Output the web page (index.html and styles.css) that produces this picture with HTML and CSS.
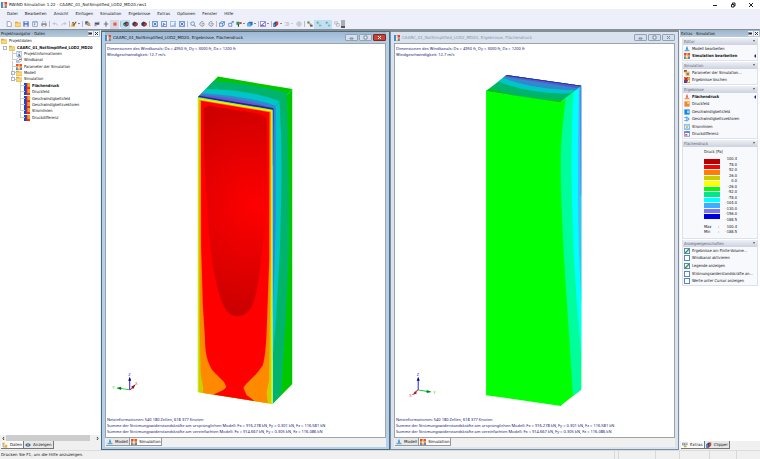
FILE: index.html
```
<!DOCTYPE html>
<html lang="de">
<head>
<meta charset="utf-8">
<title>RWIND Simulation 1.22</title>
<link rel="stylesheet" href="styles.css">
</head>
<body>
<svg class="sprite" aria-hidden="true">
  <defs>
    <symbol id="app" viewBox="0 0 16 16"><path fill="#f7a258" d="M0 0h16v16H0z"/><path fill="#2f8fdc" d="M0 0h5v16H0z"/><path fill="#fff" d="M6 2h3v12H6z"/><path fill="#e4433b" d="M10 0h6v6h-6z"/><path fill="#2f8fdc" d="M11 9h4v7h-4z"/></symbol>
    <symbol id="sim" viewBox="0 0 16 16"><path fill="#f9a046" d="M0 0h16v16H0z"/><path fill="#ee4b35" d="M0 0h6v6H0zM11 0h5v5h-5z"/><path fill="#3b8fe0" d="M0 10h5v6H0zM11 10h5v6h-5z"/><path fill="#fff3c4" d="M7 3l4 9H4z"/></symbol>
    <symbol id="tower" viewBox="0 0 16 16"><path fill="#2d8fd8" d="M7 1h2l2 9H5z"/><path fill="#58aee8" d="M2 10h12l1 4H1z"/></symbol>
    <symbol id="tower-hot" viewBox="0 0 16 16"><path fill="#ee5a24" d="M7 1h2l2 9H5z"/><path fill="#f79a4d" d="M2 10h12l1 4H1z"/></symbol>
    <symbol id="folder" viewBox="0 0 16 16"><path fill="#dda93a" d="M0 2h7l1 2h8v11H0z"/><path fill="#fbd873" d="M1 6h15l-1 8H1z"/></symbol>
    <symbol id="info" viewBox="0 0 16 16"><path fill="#fff" stroke="#8aa0b8" stroke-width="2" d="M2 1h12v14H2z"/><path fill="#2469b0" d="M7 3h3v2H7zM6 7h4v5h2v2H5v-2h2V9H6z"/></symbol>
    <symbol id="tunnel" viewBox="0 0 16 16"><path fill="#fff" stroke="#8aa0b8" stroke-width="2" d="M1 6l5-4h9v8l-5 4H1z"/><path fill="#e45a45" d="M8 5h7v3H8z"/><path fill="#4c9bd8" d="M3 9h6v3H3z"/></symbol>
    <symbol id="result" viewBox="0 0 16 16"><path fill="#e92a1e" d="M0 0h16v16H0z"/><path fill="#f6a01c" d="M9 0h7v11H9z"/><path fill="#1846c8" d="M0 0h6v16H0z"/><path fill="#8e2aa0" d="M6 0h2v16H6z"/></symbol>
    <symbol id="new" viewBox="0 0 16 16"><path fill="#fff" stroke="#7c8aa0" stroke-width="2" d="M3 1h7l4 4v10H3z"/></symbol>
    <symbol id="save" viewBox="0 0 16 16"><path fill="#4463c0" d="M1 1h14v14H1z"/><path fill="#dfe6fa" d="M4 1h8v5H4zM4 9h8v6H4z"/></symbol>
    <symbol id="preview" viewBox="0 0 16 16"><path fill="#5b8ed5" d="M1 1h14v14H1z"/><path fill="#fff" d="M3 4h10v9H3z"/><path fill="#e0843c" d="M5 6h4v5H5z"/></symbol>
    <symbol id="print" viewBox="0 0 16 16"><path fill="#777f8b" d="M1 6h14v7H1z"/><path fill="#fff" stroke="#777f8b" d="M4 1h8v5H4zM4 10h8v5H4z"/></symbol>
    <symbol id="undo" viewBox="0 0 16 16"><path fill="none" stroke="#b2b6bf" stroke-width="2" d="M3 7h7q4 0 4 5M7 3L3 7l4 4"/></symbol>
    <symbol id="redo" viewBox="0 0 16 16"><path fill="none" stroke="#b2b6bf" stroke-width="2" d="M13 7H6q-4 0-4 5M9 3l4 4-4 4"/></symbol>
    <symbol id="brush" viewBox="0 0 16 16"><path fill="#e8b23a" d="M2 6h9v9H0z"/><path fill="none" stroke="#5c4a3a" stroke-width="3" d="M6 12l8-10"/><path fill="#5c4a3a" d="M3 3h5v3H3z"/></symbol>
    <symbol id="node" viewBox="0 0 16 16"><path fill="none" stroke="#667288" stroke-width="2" d="M2 3h7v6H2zM7 12h7"/><path fill="#c9a45a" d="M8 5h6v8H8z"/><path fill="#42506b" d="M1 1h6v6H1z"/></symbol>
    <symbol id="cam" viewBox="0 0 16 16"><path fill="#4b566a" d="M2 4h12v6H2z"/><path fill="#98a5bd" d="M1 9h6v5H1zM10 2h5v3h-5z"/></symbol>
    <symbol id="axes" viewBox="0 0 16 16"><path fill="none" stroke="#6b7688" stroke-width="3" d="M8 1v14M2 8h12"/></symbol>
    <symbol id="dot" viewBox="0 0 16 16"><circle cx="8" cy="8" r="5" fill="#ee5d52"/></symbol>
    <symbol id="solid" viewBox="0 0 16 16"><path fill="#38404f" d="M1 6l8-5 6 3v7l-7 4-7-4z"/><path fill="#4bb8a6" d="M3 8l4 2v3l-4-2z"/><path fill="#e2543e" d="M9 5l5 1v4l-5 2z"/></symbol>
    <symbol id="solid-red" viewBox="0 0 16 16"><path fill="#34394a" d="M1 5l6-4 8 4v6l-7 4-7-4z"/><path fill="#d93427" d="M7 7l7-2v5l-7 4z"/></symbol>
    <symbol id="zoomfit" viewBox="0 0 16 16"><path fill="#dbe8fb" stroke="#3c72c8" stroke-width="2" d="M1 1h14v14H1z"/><path fill="none" stroke="#2759ad" stroke-width="2" d="M4 4l8 8M12 4l-8 8"/></symbol>
    <symbol id="view" viewBox="0 0 16 16"><path fill="#eaf2fe" stroke="#3c72c8" stroke-width="2" d="M1 1h14v14H1z"/><path fill="#3c72c8" d="M5 8h7v2H5zM5 5h4v2H5zM4 11h4v2H4z"/></symbol>
    <symbol id="view-x" viewBox="0 0 16 16"><path fill="#eaf2fe" stroke="#7fa4dd" stroke-width="2" d="M1 1h14v14H1z"/><path fill="none" stroke="#7fa4dd" stroke-width="2" d="M4 12h8V5"/></symbol>
    <symbol id="lens" viewBox="0 0 16 16"><circle cx="7" cy="7" r="5" fill="#e5f0fd" stroke="#4a7fcf" stroke-width="2"/><path stroke="#d8883c" stroke-width="3" d="M10 11l5 4"/></symbol>
    <symbol id="turn" viewBox="0 0 16 16"><path fill="none" stroke="#4a7fcf" stroke-width="2" d="M12 3a6 6 0 1 0 2 7"/><path fill="#d8883c" d="M7 6h8v3H7z"/></symbol>
    <symbol id="cube" viewBox="0 0 16 16"><path fill="#e5effc" stroke="#3f76c8" stroke-width="2" d="M1 6l5-4h9v8l-5 4H1zM1 6h9v8M10 6l5-4"/></symbol>
    <symbol id="box" viewBox="0 0 16 16"><path fill="#fff" stroke="#3f76c8" stroke-width="2" d="M2 6h8v8H2z"/><path fill="none" stroke="#3f76c8" stroke-width="2" d="M8 7l6-6M10 1h4v4"/></symbol>
    <symbol id="flag" viewBox="0 0 16 16"><path fill="#1f9c46" d="M1 2h8v8H1z"/><path fill="#d33a30" d="M9 3h6v5H9z"/><path fill="#374152" d="M5 8h3v7H5z"/></symbol>
    <symbol id="block" viewBox="0 0 16 16"><path fill="#2a6fae" d="M1 6l5-4h9v8l-5 4H1z"/><path fill="#63b4e6" d="M1 6h9v8H1z"/></symbol>
    <symbol id="graph" viewBox="0 0 16 16"><path fill="#fff" stroke="#4a76cc" stroke-width="2" d="M1 1h14v14H1z"/><path fill="none" stroke="#d94bb4" stroke-width="3" d="M2 13L14 3"/><path stroke="#3454c4" stroke-width="2" d="M3 12h9"/></symbol>
    <symbol id="clip" viewBox="0 0 16 16"><path fill="#27487f" d="M1 6l6-5h5v9l-5 5H1z"/><path fill="#e13a2b" d="M8 5l6-4v8l-6 5z"/><path fill="#4b8fd0" d="M1 7h5v7H1z"/></symbol>
    <symbol id="grey" viewBox="0 0 16 16"><path fill="none" stroke="#b9bec8" stroke-width="2" d="M2 4h8M5 8h9M2 12h8M11 2v12"/></symbol>
    <symbol id="grey-orb" viewBox="0 0 16 16"><circle cx="8" cy="8" r="6" fill="#d9dce3" stroke="#b9bec8" stroke-width="2"/><path stroke="#b9bec8" stroke-width="2" d="M2 8h12M8 2v12"/></symbol>
    <symbol id="layers" viewBox="0 0 16 16"><path fill="#5a8a58" d="M1 1h6v6H1z"/><path fill="#d8b043" d="M6 6h6v5H6z"/><path fill="#46618f" d="M8 10h7v5H8z"/></symbol>
    <symbol id="layers-b" viewBox="0 0 16 16"><path fill="#58a4b8" d="M2 2h5v5H2z"/><path fill="#e0c87a" d="M6 6h5v3H6z"/><path fill="#72b0cc" d="M8 10h6v4H8z"/></symbol>
    <symbol id="layers-g" viewBox="0 0 16 16"><path fill="#fff" stroke="#a4a9b3" stroke-width="2" d="M2 2h7v6H2zM7 7h7v7H7z"/></symbol>
    <symbol id="gear" viewBox="0 0 16 16"><path fill="#a95a2d" d="M0 0h8v6H0z"/><path fill="#f4b942" d="M4 4h11v11H4z"/><path fill="#578ac0" d="M7 8h6v6H7z"/></symbol>
    <symbol id="clear" viewBox="0 0 16 16"><path fill="#f39a42" d="M0 0h16v16H0z"/><path fill="#2a52c2" d="M0 8h8v8H0z"/><path stroke="#d3222a" stroke-width="3" d="M1 1l9 9M10 1L1 10"/><path fill="#fff" d="M11 8h3v5h-3z"/></symbol>
    <symbol id="field-o" viewBox="0 0 16 16"><path fill="#f3852c" d="M1 1h14v14H1z"/><path fill="#ffd19a" d="M9 2h5v6H9z"/></symbol>
    <symbol id="field-b" viewBox="0 0 16 16"><path fill="#1a86dc" d="M1 1h14v14H1z"/><path fill="#8fd8f8" d="M8 4h6v7H8z"/></symbol>
    <symbol id="vectors" viewBox="0 0 16 16"><path fill="none" stroke="#2a8fe0" stroke-width="2" d="M1 4h8M5 8h9M1 12h8M7 1l3 3-3 3M11 5l3 3-3 3M7 9l3 3-3 3"/></symbol>
    <symbol id="stream" viewBox="0 0 16 16"><path fill="#d9effc" stroke="#5aace6" stroke-width="2" d="M1 1h14v14H1z"/><circle cx="8" cy="8" r="3" fill="#e9b93a"/><path stroke="#5aace6" d="M1 4h14M1 12h14"/></symbol>
    <symbol id="diff" viewBox="0 0 16 16"><path fill="#fff" stroke="#5b74c8" stroke-width="2" d="M1 2h14v12H1z"/><path fill="#5b74c8" d="M1 1h14v4H1z"/><path fill="#e0503e" d="M3 8h6v4H3z"/></symbol>
    <symbol id="data" viewBox="0 0 16 16"><path fill="#f0b23a" d="M1 1h6v6H1zM7 7h7v8H7z"/><path fill="none" stroke="#5c86c0" stroke-width="2" d="M3 7v6h4"/></symbol>
    <symbol id="eye" viewBox="0 0 16 16"><path fill="#44648c" d="M0 8q8-9 16 0-8 9-16 0"/><circle cx="8" cy="8" r="2" fill="#fff"/></symbol>
    <symbol id="extras" viewBox="0 0 16 16"><path fill="none" stroke="#4f7c8c" stroke-width="2" d="M1 3h6v5H1zM9 3h6M9 7h6"/><path fill="#d3a845" d="M5 9h7v5H5z"/></symbol>
  </defs>
</svg>

<header class="titlebar">
  <svg class="ic"><use href="#app"/></svg>
  <h1>RWIND Simulation 1.22 - CAARC_01_NotSimplified_LOD2_MD20.rws1</h1>
  <div class="winbtns">
    <button aria-label="Minimieren"><svg viewBox="0 0 6 6"><path d="M1 3.500h4"/></svg></button>
    <button aria-label="Wiederherstellen"><svg viewBox="0 0 6 6"><path d="M1.500 2.500h2.500v2.500h-2.500zM2.500 2v-1h2.500v3h-1"/></svg></button>
    <button aria-label="Schließen"><svg viewBox="0 0 6 6"><path d="M1 1l4 4M5 1l-4 4"/></svg></button>
  </div>
</header>

<nav class="menubar">
  <button>Datei</button><button>Bearbeiten</button><button>Ansicht</button><button>Einfügen</button><button>Simulation</button><button>Ergebnisse</button><button>Extras</button><button>Optionen</button><button>Fenster</button><button>Hilfe</button>
</nav>

<div class="toolbar" role="toolbar" aria-label="Werkzeuge">
  <div class="tight">
    <button aria-label="Neu"><svg class="ic"><use href="#new"/></svg></button>
    <button aria-label="Öffnen"><svg class="ic"><use href="#folder"/></svg></button>
    <button aria-label="Speichern"><svg class="ic"><use href="#save"/></svg></button>
    <button aria-label="Vorschau"><svg class="ic"><use href="#preview"/></svg></button>
    <button aria-label="Drucken"><svg class="ic"><use href="#print"/></svg></button>
  </div>
  <i class="sep"></i>
  <button aria-label="Rückgängig"><svg class="ic"><use href="#undo"/></svg></button>
  <button aria-label="Wiederholen"><svg class="ic"><use href="#redo"/></svg></button>
  <i class="sep"></i>
  <button class="drop" aria-label="Farben"><svg class="ic"><use href="#brush"/></svg></button>
  <i class="sep"></i>
  <button aria-label="Navigator"><svg class="ic"><use href="#node"/></svg></button>
  <button aria-label="Kamera"><svg class="ic"><use href="#cam"/></svg></button>
  <button aria-label="Achsen"><svg class="ic"><use href="#axes"/></svg></button>
  <button class="on hot" aria-label="Punkt"><svg class="ic"><use href="#dot"/></svg></button>
  <i class="sep"></i>
  <button class="on" aria-label="Volumen"><svg class="ic"><use href="#solid"/></svg></button>
  <button aria-label="Flächen"><svg class="ic"><use href="#solid-red"/></svg></button>
  <button aria-label="Linien"><svg class="ic"><use href="#solid-red"/></svg></button>
  <i class="sep"></i>
  <button aria-label="Alles zeigen"><svg class="ic"><use href="#zoomfit"/></svg></button>
  <button aria-label="Ansicht X"><svg class="ic"><use href="#view"/></svg></button>
  <button aria-label="Ansicht Y"><svg class="ic"><use href="#view-x"/></svg></button>
  <button aria-label="Ansicht Z"><svg class="ic"><use href="#zoomfit"/></svg></button>
  <i class="sep"></i>
  <button aria-label="Lupe"><svg class="ic"><use href="#lens"/></svg></button>
  <button aria-label="Drehen"><svg class="ic"><use href="#turn"/></svg></button>
  <button aria-label="Verschieben"><svg class="ic"><use href="#turn"/></svg></button>
  <i class="sep"></i>
  <button aria-label="Isometrie"><svg class="ic"><use href="#cube"/></svg></button>
  <button aria-label="Perspektive"><svg class="ic"><use href="#box"/></svg></button>
  <button class="drop" aria-label="Richtung"><svg class="ic"><use href="#flag"/></svg></button>
  <button class="drop" aria-label="Darstellung"><svg class="ic"><use href="#block"/></svg></button>
  <i class="sep"></i>
  <button class="drop" aria-label="Diagramm"><svg class="ic"><use href="#graph"/></svg></button>
  <i class="sep"></i>
  <button class="drop" aria-label="Clipper"><svg class="ic"><use href="#clip"/></svg></button>
  <button class="drop dim" aria-label="Werte"><svg class="ic"><use href="#grey"/></svg></button>
  <button aria-label="Netz"><svg class="ic"><use href="#grey-orb"/></svg></button>
  <i class="sep"></i>
  <button aria-label="Ebenen"><svg class="ic"><use href="#layers"/></svg></button>
  <button class="on" aria-label="Ebene 1"><svg class="ic"><use href="#layers-b"/></svg></button>
  <button class="on" aria-label="Ebene 2"><svg class="ic"><use href="#layers-b"/></svg></button>
  <button aria-label="Kopieren"><svg class="ic"><use href="#layers-g"/></svg></button>
  <i class="grip"></i>
</div>

<main class="work">
  <aside class="dock navigator">
    <header class="dockhead"><h2>Projektnavigator - Daten</h2><button aria-label="Anheften"><svg viewBox="0 0 5 5"><path d="M1 1v3M1 2.500h3M3 1v3"/></svg></button><button aria-label="Schließen"><svg viewBox="0 0 5 5"><path d="M1 1l3 3M4 1l-3 3"/></svg></button></header>
    <ul class="tree">
      <li><svg class="ic"><use href="#folder"/></svg>Projektdaten</li>
      <li class="lv1 strong"><i class="exp"></i><svg class="ic"><use href="#folder"/></svg>CAARC_01_NotSimplified_LOD2_MD20</li>
      <li class="lv2"><svg class="ic"><use href="#info"/></svg>Projektinformationen</li>
      <li class="lv2"><svg class="ic"><use href="#tunnel"/></svg>Windkanal</li>
      <li class="lv2"><svg class="ic"><use href="#sim"/></svg>Parameter der Simulation</li>
      <li class="lv2"><i class="exp"></i><svg class="ic"><use href="#folder"/></svg>Modell</li>
      <li class="lv2"><i class="exp"></i><svg class="ic"><use href="#folder"/></svg>Simulation</li>
      <li class="lv3 strong"><svg class="ic"><use href="#result"/></svg>Flächendruck</li>
      <li class="lv3"><svg class="ic"><use href="#result"/></svg>Druckfeld</li>
      <li class="lv3"><svg class="ic"><use href="#result"/></svg>Geschwindigkeitsfeld</li>
      <li class="lv3"><svg class="ic"><use href="#result"/></svg>Geschwindigkeitsvektoren</li>
      <li class="lv3"><svg class="ic"><use href="#result"/></svg>Stromlinien</li>
      <li class="lv3"><svg class="ic"><use href="#result"/></svg>Druckdifferenz</li>
    </ul>
    <div class="hscroll"><button aria-label="Links"><svg viewBox="0 0 5 5"><path d="M3 1l-1 1.500 1 1.500"/></svg></button><i></i><button aria-label="Rechts"><svg viewBox="0 0 5 5"><path d="M2 1l1 1.500-1 1.500"/></svg></button></div>
    <div class="tabs docktabs"><button class="cur"><svg class="ic"><use href="#data"/></svg>Daten</button><button><svg class="ic"><use href="#eye"/></svg>Anzeigen</button></div>
  </aside>

  <section class="mdi">
    <article class="win active">
      <header class="winhead"><svg class="ic"><use href="#app"/></svg><h2>CAARC_01_NotSimplified_LOD2_MD20, Ergebnisse, Flächendruck</h2>
        <div class="ctl"><button aria-label="Minimieren"><svg viewBox="0 0 5 5"><path d="M1 3h3v1h-3z"/></svg></button><button aria-label="Maximieren"><svg viewBox="0 0 5 5"><path d="M1 1h3v3h-3z"/></svg></button><button class="close" aria-label="Schließen"><svg viewBox="0 0 5 5"><path d="M1 1l3 3M4 1l-3 3"/></svg></button></div></header>
      <div class="canvas">
        <p>Dimensionen des Windkanals: Dx = 4950 ft, Dy = 3000 ft, Dz = 1200 ft<br>Windgeschwindigkeit: 12.7 m/s</p>
        <svg class="scene" viewBox="107 44 278 392" role="img" aria-label="Flächendruck, Luvseite">
          <defs>
            <radialGradient id="press" gradientUnits="userSpaceOnUse" cx="256" cy="205" r="115"><stop offset="0" stop-color="#ff0000"/><stop offset="1" stop-color="#c80000"/></radialGradient>
            <clipPath id="top1"><path d="M198.500 97l20-20.500L293 89l-20 20.500z"/></clipPath>
            <clipPath id="front1"><path d="M198 97l75 12.500V403l-75-12z"/></clipPath>
            <clipPath id="side1"><path d="M273 109l20-20v294l-20 20z"/></clipPath>
          </defs>
          <g clip-path="url(#side1)">
            <path fill="#00c800" d="M273 85h20v320h-20z"/>
            <path fill="#00b56b" d="M270 85l17 8 1 24q2 80 1.300 133l-3 65-5 79-11 12z"/>
            <path fill="#00c4c8" d="M270 100l10 1q3 50 1.500 99l-1.200 50-4 70-3.300 40h-3z"/>
            <path fill="#3088cf" d="M270 100l6.300 5v110l-1.300 50-2 50h-3z"/>
            <path fill="#3038b0" d="M272 105h2.300l-.8 60h-1.500z"/>
          </g>
          <g clip-path="url(#top1)">
            <path fill="#00c800" d="M195 75h100v36H195z"/>
            <path fill="#00b56b" d="M195 81h20q45 4 72.500 12l5 18h-98z"/>
            <path fill="#00c4c8" d="M195 89h12q45 1 73 12l-3 12h-82z"/>
            <path fill="#3088cf" d="M195 93h9q45 3 72 12.500l-4 8h-77z"/>
            <path fill="#6858c8" d="M195 95l7-.5q40 4 64 11l8 3-3 4z"/>
            <path fill="#2020a8" d="M195 96l5-.5 74 12.500v3z"/>
          </g>
          <g clip-path="url(#front1)">
            <path fill="#7df02a" d="M198 96h76v310h-76z"/>
            <path fill="#f4ee00" d="M199 98l73.200 12.200V405H199z"/>
            <path fill="#cfcf00" d="M199.500 99.500l72 12V405h-72z"/>
            <path fill="#ff8a00" d="M200.300 99.800l71 11.700V260l-1.300 75-.5 45-2.500 12 1.500 12-67.500-3 3-13-2.700-15-1-50z"/>
            <path fill="#ff0000" d="M201.600 100.500l68.400 11.500-.3 148-2.700 73c-1 20-3 33-5 33-4 8-17 17-18 21l3 7 9.500 7-43-7c6-3 13-5 13-8 0-5-8-10-13-16-6-8-8-20-8-34l-2-30-1.800-60z"/>
            <path fill="url(#press)" d="M204.300 110q.5-4 5-4.500l50 8q8 2 8 9v50c0 30-3 70-5.500 83-2 23-5 40-9 49-3 7-9 11-15 11-8 0-13-7-17-19-4-11-9-38-10.300-55-3-35-6-80-6-105z"/>
          </g>
          <g class="triad">
            <path stroke="#2020ff" d="M130.500 389v-11"/><path fill="#000080" d="M129 380l1.500-4 1.500 4z"/>
            <path stroke="#00c820" d="M130.500 389l-9-1.500"/><path fill="#008020" d="M122 385.800l-5 1.200 5 2z"/>
            <path stroke="#e02020" d="M130.500 389l4-3"/><path fill="#801010" d="M132 386l4.500-2.500-2.500 4.500z"/>
            <text x="129" y="375" fill="#2020ff">Z</text><text x="113" y="388" fill="#00e020">Y</text><text x="136" y="384" fill="#f03030">X</text>
          </g>
        </svg>
        <p class="foot">Netzinformationen: 540 180 Zellen, 618 377 Knoten<br>Summe der Strömungswiderstandskräfte am ursprünglichen Modell: Fx = 916.278 kN, Fy = 0.301 kN, Fz = 116.581 kN<br>Summe der Strömungswiderstandskräfte am vereinfachten Modell: Fx = 914.667 kN, Fy = 0.305 kN, Fz = 116.086 kN</p>
      </div>
      <div class="tabs"><button><svg class="ic"><use href="#tower"/></svg>Modell</button><button class="cur"><svg class="ic"><use href="#sim"/></svg>Simulation</button></div>
    </article>

    <article class="win">
      <header class="winhead"><svg class="ic"><use href="#app"/></svg><h2>CAARC_01_NotSimplified_LOD2_MD20, Ergebnisse, Flächendruck</h2>
        <div class="ctl"><button aria-label="Minimieren"><svg viewBox="0 0 5 5"><path d="M1 3h3v1h-3z"/></svg></button><button aria-label="Maximieren"><svg viewBox="0 0 5 5"><path d="M1 1h3v3h-3z"/></svg></button><button aria-label="Schließen"><svg viewBox="0 0 5 5"><path d="M1 1l3 3M4 1l-3 3"/></svg></button></div></header>
      <div class="canvas">
        <p>Dimensionen des Windkanals: Dx = 4950 ft, Dy = 3000 ft, Dz = 1200 ft<br>Windgeschwindigkeit: 12.7 m/s</p>
        <svg class="scene" viewBox="396 44 278 392" role="img" aria-label="Flächendruck, Leeseite">
          <defs>
            <clipPath id="top2"><path d="M486.700 91l20.600-16 74.400 10.700-21 16.300z"/></clipPath>
            <clipPath id="side2"><path d="M560.700 102l21-16.300v303l-21 16.300z"/></clipPath>
          </defs>
          <path fill="#00ff00" d="M486.700 91l75 11v303l-75-10.700z"/>
          <g clip-path="url(#side2)">
            <path fill="#00ff00" d="M560 85h23v322h-23z"/>
            <path fill="#00ff9c" d="M584 80l-17 8-1 10c-2 20-5 43-5 65 0 30 2 60 3 87l4.500 70 5 77 10 10z"/>
            <path fill="#00ffff" d="M584 80h-9l-1 12c-2 25-2.300 70-1.700 105l1.700 53 3 50 5 60h2z"/>
            <path fill="#48b8ff" d="M584 80h-4.500l-1 57q-.5 60 .8 113l2.300 50h2.400z"/>
            <path fill="#6f78f0" d="M584 80h-3l-1 15 1 100h3z"/>
          </g>
          <g clip-path="url(#top2)">
            <path fill="#00b56b" d="M485 74h98v30h-98z"/>
            <path fill="#00c4c8" d="M495 80l5 2q35 13 71 11l14-10V74h-85z"/>
            <path fill="#3088cf" d="M503 77.500q30 12 74 12.500l6-2V74h-80z"/>
            <path fill="#5a58c8" d="M505 76.500l72 11.500 8-2V74h-80z"/>
            <path fill="#2020a8" d="M506 75.500l76 11V84l-75-10z"/>
            <path fill="#00c800" d="M485 88.500l7 .5q32 10 70.500 11l-1 4-76-12z"/>
          </g>
          <g class="triad">
            <path stroke="#2020ff" d="M419 389v-11"/><path fill="#000080" d="M417.500 380l1.500-4 1.500 4z"/>
            <path stroke="#00c820" d="M419 389l9 1.500"/><path fill="#008020" d="M427.500 389l5 2-5 1.200z"/>
            <path stroke="#e02020" d="M419 389l-4 3"/><path fill="#a01010" d="M417 390.500l-4.500 3.500 2-.5 3-1z"/>
            <text x="417.500" y="375" fill="#2020ff">Z</text><text x="434" y="393" fill="#00e020">Y</text><text x="410" y="396" fill="#f03030">X</text>
          </g>
        </svg>
        <p class="foot">Netzinformationen: 540 180 Zellen, 618 377 Knoten<br>Summe der Strömungswiderstandskräfte am ursprünglichen Modell: Fx = 916.278 kN, Fy = 0.301 kN, Fz = 116.581 kN<br>Summe der Strömungswiderstandskräfte am vereinfachten Modell: Fx = 914.667 kN, Fy = 0.305 kN, Fz = 116.086 kN</p>
      </div>
      <div class="tabs"><button><svg class="ic"><use href="#tower"/></svg>Modell</button><button class="cur"><svg class="ic"><use href="#sim"/></svg>Simulation</button></div>
    </article>
  </section>

  <aside class="dock extras">
    <header class="dockhead"><h2>Extras - Simulation</h2><button aria-label="Anheften"><svg viewBox="0 0 5 5"><path d="M1 1v3M1 2.500h3M3 1v3"/></svg></button><button aria-label="Schließen"><svg viewBox="0 0 5 5"><path d="M1 1l3 3M4 1l-3 3"/></svg></button></header>
    <div class="panels">
      <section>
        <button class="grp">Editor</button>
        <div class="list two"><button><svg class="ic"><use href="#tower"/></svg>Modell bearbeiten</button><button class="strong mark"><svg class="ic"><use href="#sim"/></svg>Simulation bearbeiten</button></div>
      </section>
      <section>
        <button class="grp">Simulation</button>
        <div class="list two"><button><svg class="ic"><use href="#gear"/></svg>Parameter der Simulation...</button><button><svg class="ic"><use href="#clear"/></svg>Ergebnisse löschen</button></div>
      </section>
      <section>
        <button class="grp">Ergebnisse</button>
        <div class="list six"><button class="strong mark"><svg class="ic"><use href="#tower-hot"/></svg>Flächendruck</button><button><svg class="ic"><use href="#field-o"/></svg>Druckfeld</button><button><svg class="ic"><use href="#field-b"/></svg>Geschwindigkeitsfeld</button><button><svg class="ic"><use href="#vectors"/></svg>Geschwindigkeitsvektoren</button><button><svg class="ic"><use href="#stream"/></svg>Stromlinien</button><button><svg class="ic"><use href="#diff"/></svg>Druckdifferenz</button></div>
      </section>
      <section>
        <button class="grp">Flächendruck</button>
        <div class="legend">
          <h3>Druck [Pa]</h3>
          <div class="scale">
            <div class="bars"><i class="c1"></i><i class="c2"></i><i class="c3"></i><i class="c4"></i><i class="c5"></i><i class="c6"></i><i class="c7"></i><i class="c8"></i><i class="c9"></i><i class="c10"></i><i class="c11"></i></div>
            <div class="vals"><span>100.4</span><span>78.0</span><span>52.0</span><span>26.0</span><span>0.0</span><span>-26.0</span><span>-52.0</span><span>-78.0</span><span>-104.0</span><span>-130.0</span><span>-156.0</span><span>-188.5</span></div>
          </div>
          <div class="ext"><span>Max</span><span>:</span><span>100.4</span><span>Min</span><span>:</span><span>-188.5</span></div>
        </div>
      </section>
      <section>
        <button class="grp">Anzeigeeigenschaften</button>
        <div class="list five"><label><input type="checkbox" checked>Ergebnisse am Finite-Volume...</label><label><input type="checkbox">Windkanal aktivieren</label><label><input type="checkbox" checked>Legende anzeigen</label><label><input type="checkbox">Strömungswiderstandskräfte an...</label><label><input type="checkbox">Werte unter Cursor anzeigen</label></div>
      </section>
    </div>
    <div class="tabs docktabs"><button class="cur"><svg class="ic"><use href="#extras"/></svg>Extras</button><button><svg class="ic"><use href="#clip"/></svg>Clipper</button></div>
  </aside>
</main>

<footer class="status"><span>Drücken Sie F1, um die Hilfe anzuzeigen.</span><i class="w4"></i><i class="w37"></i><i class="w24"></i><i class="w30"></i><i class="w27"></i><i class="w24"></i></footer>
</body>
</html>
```

FILE: styles.css
```
* { box-sizing: border-box; }

body {
  margin: 0;
  height: 100vh;
  display: grid;
  grid-template-rows: 9px 10px 11px minmax(0, 1fr) 9px;
  overflow: hidden;
  background: #f0f0f0;
  color: #101010;
  font: 4px/6px "DejaVu Sans Condensed", "Open Sans", sans-serif;
}

h1, h2, h3, p, ul { margin: 0; padding: 0; font: inherit; }
ul { list-style: none; }
button {
  margin: 0;
  padding: 0;
  border: 0;
  background: none;
  color: inherit;
  font: inherit;
  display: flex;
  align-items: center;
}
.sprite { position: absolute; width: 0; height: 0; }
.ic { width: 6px; height: 6px; flex: none; }
.strong { font-weight: 700; }

/* title and menu */
.titlebar, .menubar, .winhead, .tabs, .status { font-family: "DejaVu Sans", sans-serif; }
.titlebar { display: flex; align-items: center; gap: 2px; padding-left: 1px; background: #fff; }
.titlebar h1 { flex: 1; }
.winbtns { display: flex; }
.winbtns button { width: 18px; justify-content: center; }
.winbtns svg { width: 6px; height: 6px; fill: none; stroke: #222; }
.menubar { display: flex; gap: 7px; padding-left: 7px; background: #edf0fa; }

/* toolbar */
.toolbar { display: flex; align-items: center; padding-left: 5px; background: #edf0fa; border-bottom: 1px solid #8b8f94; }
.toolbar button { width: 9px; height: 9px; justify-content: center; }
.toolbar .tight { display: flex; width: 43px; }
.toolbar .tight button { flex: 1; }
.toolbar .on { background: #bfe0f2; }
.toolbar .hot { background: #d5dbe6; }
.toolbar .drop { width: 11px; }
.drop::after { content: ""; border: 1px solid transparent; border-top-color: #222; margin-left: 1px; }
.dim::after { border-top-color: #aaa; }
.sep { width: 1px; height: 6px; margin-left: 1px; background: #b4bac8; }
.grip { width: 4px; height: 8px; background: #a9adb8; border-bottom: 2px solid #555; }

.work { display: grid; grid-template-columns: 100px minmax(0, 1fr) 80px; gap: 1px; min-height: 0; }

/* docked panels */
.dock { display: flex; flex-direction: column; min-width: 0; min-height: 0; background: #fff; }
.dockhead { display: flex; align-items: center; gap: 1px; height: 7px; padding: 0 1px; background: linear-gradient(#9db4cc, #b8cbdd); }
.dockhead h2 { flex: 1; }
.dockhead button { width: 5px; height: 5px; justify-content: center; background: #f4f6f9; }
.dockhead svg, .hscroll svg { width: 5px; height: 5px; fill: none; stroke: #333; }
.tree { height: 84px; padding-top: 1px; display: grid; grid-auto-rows: 1fr; flex: none; overflow: hidden; }
.tree li { position: relative; display: flex; align-items: center; gap: 2px; padding-left: 1px; white-space: nowrap; min-height: 0; }
.tree .lv1 { padding-left: 9px; }
.tree .lv2 { padding-left: 16px; }
.tree .lv3 { padding-left: 24px; }
.tree .lv2::before, .tree .lv3::before { content: ""; position: absolute; left: 12px; top: -3px; bottom: 50%; width: 4px; border-left: 1px solid #ccc; border-bottom: 1px solid #ccc; }
.tree .lv3::before { left: 20px; }
.exp { position: absolute; left: 3px; width: 4px; height: 4px; border: 1px solid #a9b4c2; background: #fff; }
.lv2 .exp { left: 11px; }
.hscroll { display: flex; align-items: center; height: 6px; margin-top: auto; background: #f0f0f0; }
.hscroll i { flex: 1; height: 6px; margin-right: 4px; background: #cdcdcd; }
.hscroll button { width: 6px; justify-content: center; }

.tabs { display: flex; height: 9px; flex: none; padding-left: 1px; background: #f0f0f0; }
.tabs button { gap: 2px; height: 8px; padding: 0 1px; border: 1px solid #999; border-width: 0 1px 1px 0; background: #e8e8e8; }
.tabs .cur { background: #fbfbfb; }
.docktabs button { border-color: #777; }

/* document windows */
.mdi { display: grid; grid-template-columns: 1fr 1fr; background: #8b8f94; padding-top: 1px; min-width: 0; min-height: 0; }
.win { display: flex; flex-direction: column; min-width: 0; min-height: 0; padding: 0 3px 2px 3px; border: 1px solid #7d8da0; background: #d9e3ef; }
.active { background: #b7d0ea; border-color: #4b6d80; }
.winhead { display: flex; align-items: center; gap: 2px; height: 11px; flex: none; color: #8b929b; }
.active .winhead { color: #101010; background: linear-gradient(#9db8d4, #b9cfe6); }
.winhead h2 { flex: 1; white-space: nowrap; overflow: hidden; }
.ctl { display: flex; gap: 1px; }
.ctl button { width: 13px; height: 7px; justify-content: center; border: 1px solid #93a3b5; border-radius: 1px; background: #d3dfec; }
.ctl svg { width: 5px; height: 5px; fill: #fff; stroke: #7a8795; }
.ctl .close { background: #cc4030; border-color: #7c2a22; }
.close svg { stroke: #fff; }
.canvas { position: relative; flex: 1; min-height: 0; display: flex; flex-direction: column; justify-content: space-between; padding: 2px 1px; border: 1px solid #9fa3a8; background: #fff; color: #141478; font-family: "Noto Sans", sans-serif; overflow: hidden; white-space: nowrap; }
.scene { position: absolute; inset: 0; width: 100%; height: 100%; }
.triad text { font-size: 4px; }

/* task panels */
.panels { flex: 1; min-height: 0; padding: 1px 2px; }
.panels section { border: 1px solid #dde1ee; border-width: 0 1px 1px; background: #f8f9fd; margin-bottom: 1px; }
.grp { width: 100%; height: 7px; padding: 0 2px 0 1px; justify-content: space-between; color: #5b6474; background: linear-gradient(#eef0f5, #ccd2df); }
.grp::after { content: ""; border: 1px solid transparent; border-top: 2px solid #555; }
.list { display: grid; grid-auto-rows: 1fr; }
.two { height: 15px; }
.six { height: 45px; }
.five { height: 38px; }
.list button, .list label { display: flex; align-items: center; gap: 2px; padding-left: 1px; white-space: nowrap; overflow: hidden; }
.mark::after { content: ""; margin-left: auto; margin-right: 1px; border: 2px solid transparent; border-width: 2px 2px 2px 0; border-right-color: #20208c; }
.list input { appearance: none; width: 6px; height: 6px; margin: 0; border: 1px solid #5b88bb; background: #fff; flex: none; }
.list input:checked { background: linear-gradient(135deg, #fff 30%, #2b9a35 50%, #fff 80%); }
.legend { height: 91px; padding: 2px 20px 0 21px; }
.scale { display: grid; grid-template-columns: 16px 1fr; height: 67px; padding-top: 1px; }
.bars { display: flex; flex-direction: column; gap: 1px; padding: 3px 0; }
.bars i { flex: 1; }
.vals { display: grid; grid-auto-rows: 1fr; text-align: right; line-height: 5px; }
.ext { display: grid; grid-template-columns: 14px 1fr 1fr; line-height: 5px; padding-top: 2px; }
.ext span:nth-child(3n) { text-align: right; }
.c1 { background: #b80000; }
.c2 { background: #ff0000; }
.c3 { background: #ff8000; }
.c4 { background: #cccc00; }
.c5 { background: #ffff00; }
.c6 { background: #00ff00; }
.c7 { background: #00e68a; }
.c8 { background: #00ffff; }
.c9 { background: #38b0ff; }
.c10 { background: #7878f8; }
.c11 { background: #0000e0; }

.status { display: flex; align-items: center; padding-left: 1px; border-top: 1px solid #dcdcdc; }
.status span { flex: 1; }
.status i { height: 8px; border-left: 1px solid #d8d8d8; }
.w4 { width: 4px; }
.w37 { width: 37px; }
.w24 { width: 24px; }
.w30 { width: 30px; }
.w27 { width: 27px; }
```
